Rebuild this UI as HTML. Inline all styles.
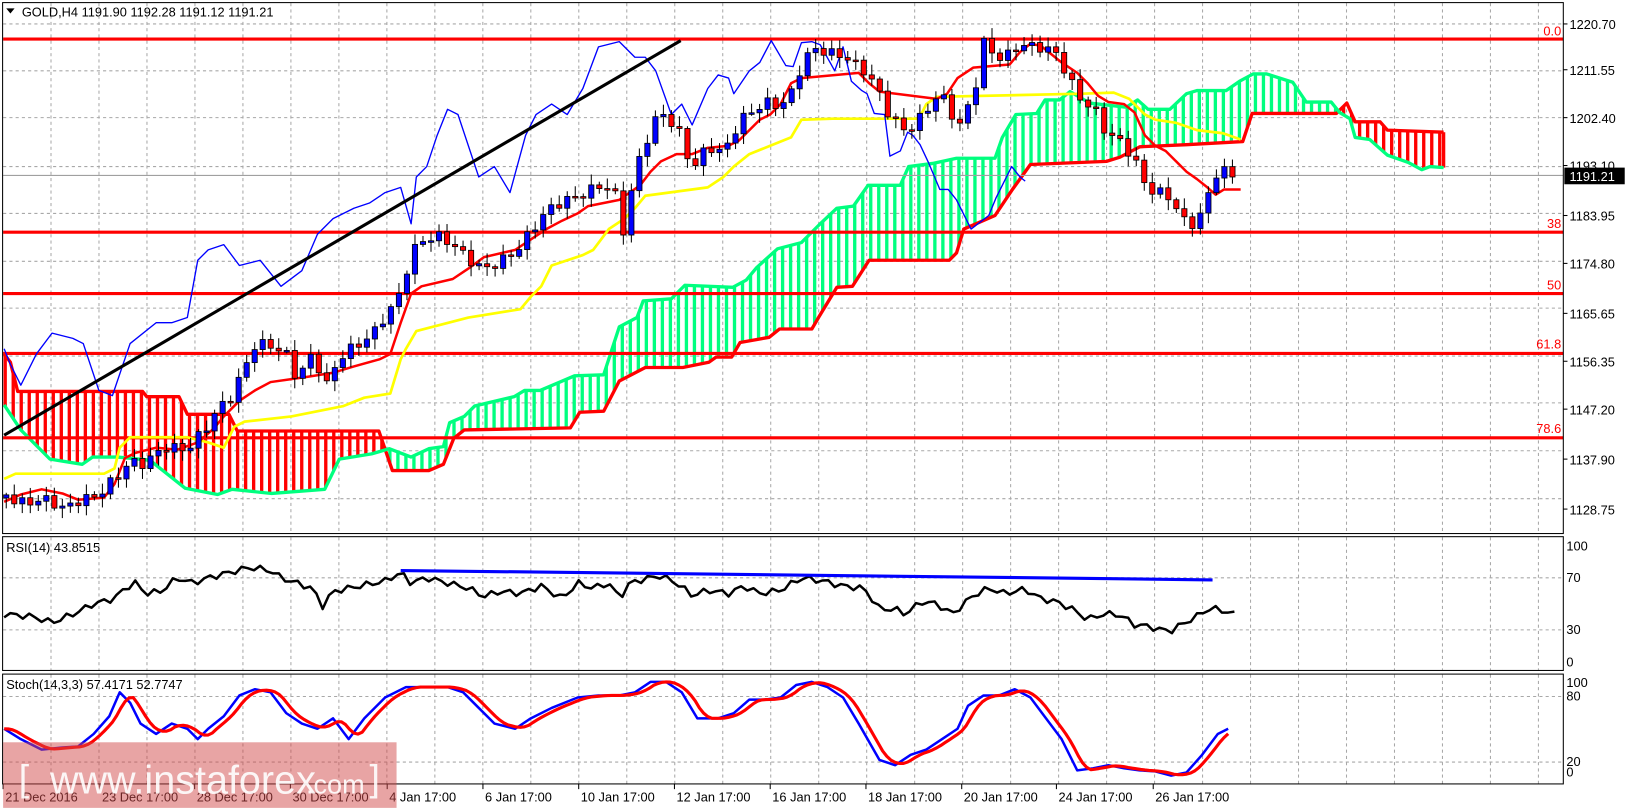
<!DOCTYPE html>
<html><head><meta charset="utf-8">
<style>
html,body{margin:0;padding:0;background:#fff;width:1632px;height:811px;overflow:hidden}
svg{display:block}
text{font-family:"Liberation Sans","DejaVu Sans",sans-serif;font-size:12.3px;fill:#000}
</style></head><body>
<svg id="s" width="1632" height="811" viewBox="0 0 1568 779" preserveAspectRatio="none" xmlns="http://www.w3.org/2000/svg">
<rect x="0" y="0" width="1568" height="779" fill="#fff"/>
<g id="grid"></g>
<g id="kumo"></g>
<g id="fib" stroke="#ff0000" stroke-width="3">
<line x1="3" y1="37.5" x2="1502" y2="37.5"/>
<line x1="3" y1="223" x2="1502" y2="223"/>
<line x1="3" y1="282" x2="1502" y2="282"/>
<line x1="3" y1="339.5" x2="1502" y2="339.5"/>
<line x1="3" y1="420.5" x2="1502" y2="420.5"/>
</g>
<line x1="3" y1="168.5" x2="1502" y2="168.5" stroke="#a0a0a0" stroke-width="1"/>
<g id="lines"></g>
<g id="candles"></g>
<line x1="4" y1="418" x2="654" y2="39" stroke="#000" stroke-width="3"/>
<g id="osc"></g>
<g font-size="12.3">
<text x="1500" y="34" text-anchor="end" style="fill:#ff0000">0.0</text>
<text x="1500" y="219" text-anchor="end" style="fill:#ff0000">38</text>
<text x="1500" y="278" text-anchor="end" style="fill:#ff0000">50</text>
<text x="1500" y="335" text-anchor="end" style="fill:#ff0000">61.8</text>
<text x="1500" y="416" text-anchor="end" style="fill:#ff0000">78.6</text>
</g>
<g fill="none" stroke="#000" stroke-width="1">
<rect x="2.5" y="2.5" width="1499.5" height="510"/>
<rect x="2.5" y="515.5" width="1499.5" height="128.5"/>
<rect x="2.5" y="647.5" width="1499.5" height="105.5"/>
</g>
<path d="M6 8 L14 8 L10 13 Z" fill="#000"/>
<text x="21" y="16">GOLD,H4  1191.90 1192.28 1191.12 1191.21</text>
<text x="6" y="530">RSI(14) 43.8515</text>
<text x="6" y="662">Stoch(14,3,3) 57.4171 52.7747</text>
<g id="axis"></g>
<rect x="1503" y="161" width="58" height="16" fill="#000"/>
<text x="1508" y="174" style="fill:#fff">1191.21</text>
<g id="time"></g>
<rect x="3" y="713" width="378" height="63" fill="#d24a4a" opacity="0.5"/>
<text x="18" y="760" style="fill:#fff;font-size:36px;opacity:0.9">[</text>
<text x="48" y="762" style="fill:#fff;font-size:38px;opacity:0.9">www.instaforex</text>
<text x="294" y="762" style="fill:#fff;font-size:26px;opacity:0.9">.com</text>
<text x="355" y="760" style="fill:#fff;font-size:36px;opacity:0.9">]</text>
</svg>
<script>
(function(){
var NS="http://www.w3.org/2000/svg";
function el(p,t,a){var e=document.createElementNS(NS,t);for(var k in a)e.setAttribute(k,a[k]);p.appendChild(e);return e;}
function g(id){return document.getElementById(id);}
function interp(P,x){if(x<=P[0][0])return P[0][1];for(var i=1;i<P.length;i++){if(x<=P[i][0]){var a=P[i-1],b=P[i];return a[1]+(b[1]-a[1])*(x-a[0])/(b[0]-a[0]);}}return P[P.length-1][1];}
function pl(p,P,st,w){var d=P.map(function(q,i){return (i?'L':'M')+q[0].toFixed(1)+' '+q[1].toFixed(1);}).join(' ');return el(p,'path',{d:d,fill:'none',stroke:st,'stroke-width':w,'stroke-linejoin':'round'});}
var G=g('grid'),x;
[23,68,113,160,205,251,296,342,387,433,479,555,605,669,732].forEach(function(y){el(G,'line',{x1:3,x2:1502,y1:y,y2:y,stroke:'#a8a8a8','stroke-dasharray':'3,3','stroke-width':1});});
for(x=2.9+46.1;x<1502;x+=46.1){(function(xx){[[3,512],[516,644],[648,753]].forEach(function(r){el(G,'line',{x1:xx,x2:xx,y1:r[0],y2:r[1],stroke:'#a8a8a8','stroke-dasharray':'3,3','stroke-width':1});});})(x);}
var AX=g('axis');
[['1220.70',28],['1211.55',72],['1202.40',118],['1193.10',164],['1183.95',212],['1174.80',258],['1165.65',306],['1156.35',352],['1147.20',398],['1137.90',446],['1128.75',494]].forEach(function(l){el(AX,'line',{x1:1502,x2:1506,y1:l[1]-5,y2:l[1]-5,stroke:'#000'});var t=el(AX,'text',{x:1508,y:l[1]});t.textContent=l[0];});
[['100',529],['70',559],['30',609],['0',640],['100',660],['80',673],['20',736],['0',746]].forEach(function(l){var t=el(AX,'text',{x:1505,y:l[1]});t.textContent=l[0];});
var T=g('time');
[['21 Dec 2016',3],['23 Dec 17:00',96],['28 Dec 17:00',187],['30 Dec 17:00',279],['4 Jan 17:00',372],['6 Jan 17:00',464],['10 Jan 17:00',556],['12 Jan 17:00',648],['16 Jan 17:00',740],['18 Jan 17:00',832],['20 Jan 17:00',924],['24 Jan 17:00',1015],['26 Jan 17:00',1108]].forEach(function(l){el(T,'line',{x1:l[1],x2:l[1],y1:753,y2:758,stroke:'#000'});var t=el(T,'text',{x:l[1]+2,y:770});t.textContent=l[0];});
var SA=[[4,389],[20,413],[48,441],[79,446],[89,439],[113,439],[144,442],[178,469],[209,475],[223,470],[261,474],[312,470],[326,441],[357,436],[374,431],[395,439],[412,431],[426,429],[432,406],[446,400],[456,390],[494,381],[504,375],[519,375],[552,361],[580,360],[595,314],[612,305],[618,289],[645,287],[658,274],[704,276],[717,269],[727,257],[747,239],[770,233],[787,216],[804,200],[820,198],[834,178],[865,178],[873,160],[896,157],[919,152],[956,152],[963,132],[976,110],[996,109],[1004,96],[1018,96],[1028,88],[1047,99],[1082,103],[1093,96],[1103,105],[1124,105],[1140,90],[1150,87],[1178,87],[1191,78],[1204,71],[1217,71],[1242,79],[1255,98],[1279,98],[1287,108],[1297,114],[1302,132],[1316,134],[1333,149],[1353,156],[1366,163],[1374,160],[1387,161]];
var SB=[[4,340],[10,348],[17,376],[137,376],[141,381],[172,381],[180,398],[220,398],[228,414],[364,414],[377,452],[412,452],[426,446],[436,421],[446,413],[548,411],[557,396],[580,395],[595,366],[620,353],[656,353],[681,348],[688,343],[703,343],[711,329],[739,324],[749,316],[780,316],[787,304],[804,276],[819,275],[835,250],[912,250],[919,243],[926,220],[956,207],[972,183],[990,158],[1063,155],[1076,151],[1095,141],[1140,139],[1194,136],[1203,109],[1284,109],[1294,99],[1302,117],[1326,117],[1333,125],[1387,127]];
var K=g('kumo');
for(x=5;x<=1388;x+=7.7){var a=interp(SA,x),b=interp(SB,x);el(K,'line',{x1:x,x2:x,y1:a,y2:b,stroke:(a<b?'#00ff7f':'#ff0000'),'stroke-width':3.2});}
el(K,'line',{x1:1387,x2:1387,y1:127,y2:161,stroke:'#ff0000','stroke-width':3.2});
pl(K,SB,'#ff0000',3.2);pl(K,SA,'#00ff7f',3.2);
var L=g('lines');
pl(L,[[4,460],[15,455],[100,455],[110,450],[115,430],[125,420],[180,420],[200,425],[215,430],[225,410],[235,405],[280,400],[330,390],[350,382],[375,378],[385,345],[390,335],[400,318],[450,305],[500,297],[510,285],[520,275],[530,255],[560,245],[570,240],[585,220],[600,210],[610,200],[620,188],[680,180],[695,170],[705,160],[720,148],[740,140],[760,132],[770,115],[800,114],[883,114],[890,100],[900,93],[1040,90],[1070,89],[1085,95],[1100,110],[1110,115],[1130,118],[1150,125],[1175,128],[1192,134]],'#ffff00',2.6);
pl(L,[[4,482],[20,475],[40,470],[60,474],[75,480],[100,478],[110,465],[120,440],[130,435],[150,430],[170,432],[190,425],[205,412],[215,400],[230,385],[245,375],[260,367],[295,362],[320,358],[340,352],[365,345],[375,340],[385,310],[395,282],[405,275],[435,268],[450,258],[465,247],[495,240],[510,230],[525,220],[540,212],[555,205],[565,198],[595,192],[605,185],[615,178],[625,165],[635,155],[650,148],[665,148],[680,142],[700,140],[710,135],[720,125],[730,115],[740,110],[750,100],[760,80],[770,75],[825,70],[835,80],[845,88],[900,95],[910,90],[920,75],[935,65],[970,62],[980,50],[990,42],[1000,44],[1010,52],[1020,60],[1035,70],[1045,80],[1055,92],[1065,98],[1080,100],[1090,108],[1100,130],[1110,140],[1120,145],[1130,155],[1140,165],[1150,172],[1160,180],[1168,187],[1176,182],[1192,182]],'#ff0000',2.4);
pl(L,[[4,335],[10,350],[20,370],[35,340],[50,320],[70,325],[80,330],[95,375],[108,380],[125,330],[150,310],[165,310],[180,305],[190,250],[200,240],[215,235],[230,255],[250,250],[270,275],[290,260],[305,225],[320,210],[340,200],[355,195],[370,185],[385,180],[395,215],[400,170],[410,160],[420,130],[430,105],[440,110],[460,170],[475,160],[490,185],[505,130],[515,110],[530,100],[545,110],[560,85],[575,45],[595,40],[610,55],[620,55],[630,68],[645,110],[655,100],[665,120],[680,85],[690,72],[700,75],[705,90],[720,68],[730,60],[741,39],[755,63],[762,64],[770,41],[780,40],[788,43],[802,68],[810,45],[818,78],[828,87],[833,90],[840,109],[850,110],[855,150],[865,145],[872,127],[877,130],[884,139],[892,156],[903,182],[911,182],[919,192],[933,220],[950,207],[957,190],[972,160],[980,170],[985,174]],'#0000ff',1.3);
var C=g('candles');
var cp=[[5,475],[20,480],[40,482],[60,488],[75,478],[95,478],[110,462],[125,440],[140,445],[160,432],[180,428],[200,410],[210,395],[220,385],[235,350],[245,330],[260,335],[275,340],[285,360],[300,340],[315,375],[325,345],[340,330],[360,320],[375,300],[385,280],[395,240],[405,230],[420,230],[435,235],[450,245],[465,260],[480,255],[495,240],[510,220],[520,210],[540,195],[555,185],[575,180],[590,185],[600,225],[610,160],[625,125],[635,110],[645,120],[655,130],[665,160],[680,140],[690,150],[700,140],[710,115],[720,105],[735,100],[750,105],[760,90],[770,60],[780,45],[790,50],[800,55],[815,55],[830,65],[840,80],[855,115],[870,125],[885,110],[900,95],[910,100],[920,125],[930,100],[940,70],[945,40],[955,55],[965,60],[975,45],[985,40],[1000,45],[1015,55],[1030,80],[1040,95],[1050,100],[1060,125],[1070,135],[1080,140],[1090,150],[1100,175],[1110,185],[1120,190],[1130,200],[1140,215],[1150,210],[1160,190],[1170,165],[1180,168],[1186,172]];
var pv=null,n=0;
for(x=6;x<=1187;x+=7.7,n++){
 var c=interp(cp,x)+Math.sin(n*2.3)*5+Math.sin(n*0.9)*3;
 if(x>1183)c=170;
 var o=(pv===null)?c+3:pv;
 var tp=Math.min(o,c),bt=Math.max(o,c);
 var hi=tp-2-Math.abs(Math.sin(n*1.7))*8,lo=bt+2+Math.abs(Math.cos(n*1.3))*8;
 el(C,'line',{x1:x,x2:x,y1:hi,y2:lo,stroke:'#000','stroke-width':1});
 el(C,'rect',{x:x-2.5,y:tp,width:5,height:Math.max(bt-tp,1.5),fill:(c<o?'#0000ff':'#ff0000'),stroke:'#000','stroke-width':0.8});
 pv=c;
}
var O=g('osc');
var rsi=[[4,590],[30,592],[50,598],[70,590],[90,580],[110,575],[120,565],[130,560],[140,570],[155,568],[170,555],[185,560],[200,555],[220,550],[240,545],[260,548],[270,555],[285,560],[300,565],[310,582],[320,568],[335,565],[350,562],[370,558],[385,550],[395,560],[410,555],[430,560],[450,565],[465,573],[480,568],[500,570],[520,563],[540,575],[555,560],[570,565],[585,560],[595,575],[605,560],[620,556],[635,553],[650,560],[665,572],[680,567],[700,570],[715,563],[730,570],[750,567],[770,555],[790,558],[810,563],[830,565],[845,585],[860,585],[870,590],[885,578],[900,580],[915,590],[935,572],[950,565],[965,570],[985,566],[1000,575],[1015,578],[1030,585],[1045,595],[1060,590],[1075,590],[1090,600],[1105,602],[1115,605],[1125,606],[1135,600],[1150,592],[1160,585],[1170,585],[1186,590]];
var r2=[];for(x=4;x<=1186;x+=6){r2.push([x,interp(rsi,x)+Math.sin(x*0.37)*3]);}
pl(O,r2,'#000',2.4);
el(O,'line',{x1:385,y1:548,x2:1165,y2:557,stroke:'#0000ff','stroke-width':3});
var st=[[4,700],[20,710],[40,720],[60,718],[75,717],[90,705],[105,688],[115,665],[125,675],[135,695],[150,705],[165,695],[180,700],[190,710],[200,700],[215,688],[230,668],[245,662],[260,665],[275,685],[290,695],[305,700],[320,690],[335,710],[350,690],[370,670],[390,660],[410,660],[430,660],[445,665],[460,680],[475,695],[495,700],[510,690],[530,680],[555,670],[575,668],[595,668],[610,665],[625,655],[640,655],[655,665],[670,690],[690,690],[705,685],[720,672],[735,672],[750,670],[765,658],[780,655],[795,660],[810,670],[825,695],[845,730],[860,735],[875,725],[890,720],[905,710],[920,700],[930,678],[945,668],[960,668],[975,662],[990,670],[1005,690],[1020,710],[1035,740],[1050,738],[1065,735],[1080,738],[1095,740],[1110,741],[1125,745],[1140,742],[1155,725],[1170,705],[1180,700]];
pl(O,st,'#0000ff',2.4);
var red=[];for(x=4;x<=1180;x+=4){red.push([x,(interp(st,x-3)+interp(st,x-8)+interp(st,x-13))/3]);}
pl(O,red,'#ff0000',3);
})();
</script>
</body></html>
